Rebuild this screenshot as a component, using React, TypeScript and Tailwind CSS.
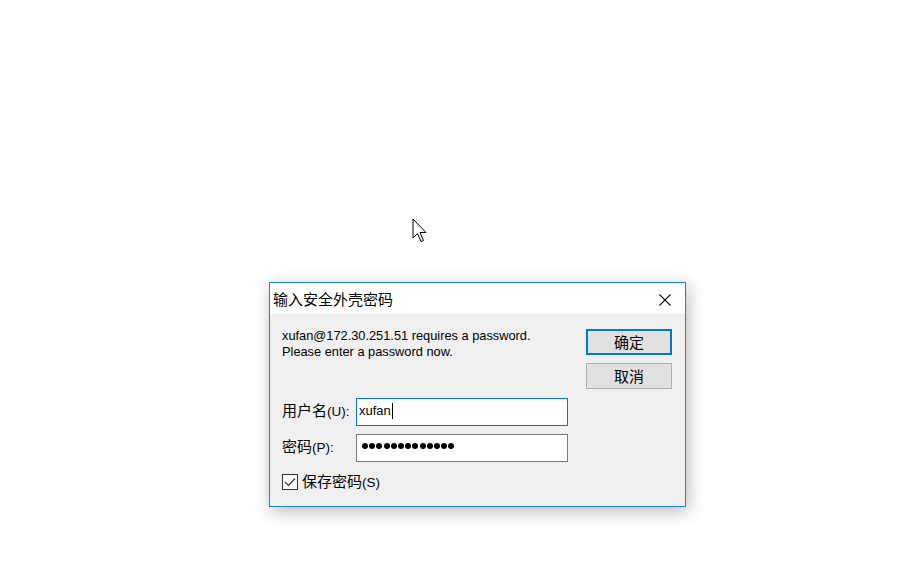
import React from 'react';

const font = { fontFamily: '"Liberation Sans", "Noto Sans CJK SC", sans-serif' };

const Cursor = () => (
  <svg className="absolute left-[412px] top-[218px]" width="17" height="26" viewBox="0 0 17 26">
    <path
      d="M1 1 L1 20 L5.5 15.5 L9 23.5 L11.5 22.5 L8 14.5 L14 14.5 Z"
      fill="#fff"
      stroke="#000"
      strokeWidth="1"
      strokeLinejoin="miter"
    />
  </svg>
);

export default function App() {
  const dots = Array.from({ length: 13 });

  return (
    <div className="relative w-[921px] h-[581px] bg-white pl-[269px] pt-[282px] overflow-hidden" style={font}>
      <Cursor />

      <div className="w-[417px] h-[225px] border border-[#1883d7] bg-[#f0f0f0] shadow-[2px_4px_16px_rgba(0,0,0,0.28)] flex flex-col">
        {/* title bar */}
        <div className="h-[31px] bg-white flex items-center justify-between">
          <span className="pl-[3px] pt-[2px] text-[15px] text-black leading-none">输入安全外壳密码</span>
          <svg className="mr-[14px] mt-[3px]" width="12" height="12" viewBox="0 0 12 12">
            <path d="M0.5 0.5 L11.5 11.5 M11.5 0.5 L0.5 11.5" stroke="#111" strokeWidth="1.1" />
          </svg>
        </div>

        {/* body */}
        <div className="flex-1 flex pl-[12px] pr-[13px]">
          <div className="flex-1 pt-[14px]">
            <div className="text-[12.8px] leading-[16px] text-black">
              <p>xufan@172.30.251.51 requires a password.</p>
              <p>Please enter a password now.</p>
            </div>

            <div className="mt-[38px] flex items-center">
              <label className="w-[74px] text-[15px] leading-none text-black pb-[2px]">
                用户名<span className="text-[13.5px]">(U):</span>
              </label>
              <div className="w-[212px] h-[28px] border border-[#0078d7] bg-white flex items-center pl-[2px] pb-[2px] text-[13px] text-black">
                xufan<span className="ml-[1px] w-px h-[16px] bg-black" />
              </div>
            </div>

            <div className="mt-[8px] flex items-center">
              <label className="w-[74px] text-[15px] leading-none text-black pb-[3px]">
                密码<span className="text-[13.5px]">(P):</span>
              </label>
              <div className="w-[212px] h-[28px] border border-[#7a7a7a] bg-white flex items-center pl-[5px] pb-[5px] gap-[1.2px]">
                {dots.map((_, i) => (
                  <span key={i} className="w-[6px] h-[6px] rounded-full bg-black" />
                ))}
              </div>
            </div>

            <div className="mt-[12px] flex items-center gap-[4px]">
              <span className="w-[16px] h-[16px] border border-[#333] bg-white flex items-center justify-center">
                <svg width="12" height="10" viewBox="0 0 12 10">
                  <path d="M1 5 L4.5 8.5 L11 1.5" fill="none" stroke="#333" strokeWidth="1.2" />
                </svg>
              </span>
              <span className="text-[15px] leading-none text-black">
                保存密码<span className="text-[13.5px]">(S)</span>
              </span>
            </div>
          </div>

          <div className="w-[86px] pt-[15px] flex flex-col gap-[8px]">
            <button className="h-[26px] border-2 border-[#0078d7] bg-[#e1e1e1] text-[15px] leading-none text-black">
              确定
            </button>
            <button className="h-[26px] border border-[#adadad] bg-[#e1e1e1] text-[15px] leading-none text-black">
              取消
            </button>
          </div>
        </div>
      </div>
    </div>
  );
}
